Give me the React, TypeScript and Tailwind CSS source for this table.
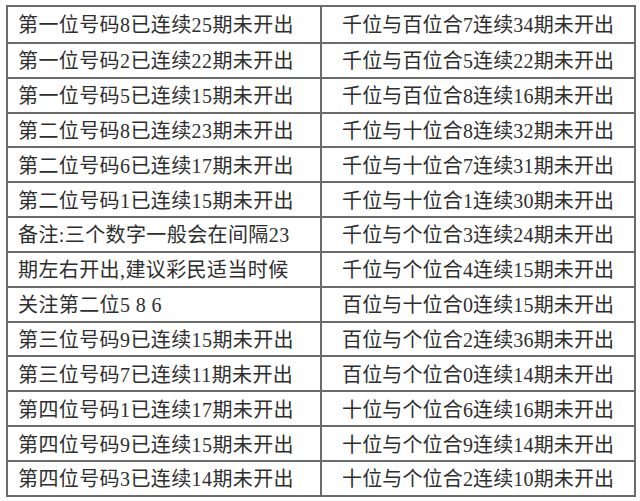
import React from "react";

const left = [
  "第一位号码8已连续25期未开出",
  "第一位号码2已连续22期未开出",
  "第一位号码5已连续15期未开出",
  "第二位号码8已连续23期未开出",
  "第二位号码6已连续17期未开出",
  "第二位号码1已连续15期未开出",
  "备注:三个数字一般会在间隔23",
  "期左右开出,建议彩民适当时候",
  "关注第二位5 8 6",
  "第三位号码9已连续15期未开出",
  "第三位号码7已连续11期未开出",
  "第四位号码1已连续17期未开出",
  "第四位号码9已连续15期未开出",
  "第四位号码3已连续14期未开出",
];

const right = [
  "千位与百位合7连续34期未开出",
  "千位与百位合5连续22期未开出",
  "千位与百位合8连续16期未开出",
  "千位与十位合8连续32期未开出",
  "千位与十位合7连续31期未开出",
  "千位与十位合1连续30期未开出",
  "千位与个位合3连续24期未开出",
  "千位与个位合4连续15期未开出",
  "百位与十位合0连续15期未开出",
  "百位与个位合2连续36期未开出",
  "百位与个位合0连续14期未开出",
  "十位与个位合6连续16期未开出",
  "十位与个位合9连续14期未开出",
  "十位与个位合2连续10期未开出",
];

export default function App() {
  return (
    <div className="w-[640px] h-[501px] bg-white pt-[5px] pl-[6px]">
      <div
        className="w-[630px] border-2 border-[#6b6b6b] text-[#2e2e2e] text-[20px] tracking-[0.4px]"
        style={{ fontFamily: '"Liberation Serif", "Noto Sans CJK SC", serif' }}
      >
        {left.map((l, i) => (
          <div
            key={i}
            className={`flex h-[34.85px] ${i > 0 ? "border-t-2 border-[#6b6b6b]" : ""}`}
          >
            <div className="w-[314px] border-r-2 border-[#6b6b6b] flex items-center pl-[10px] pt-[2px] whitespace-pre">
              {l}
            </div>
            <div className="flex-1 flex items-center pl-[20px] pt-[2px] tracking-[0.15px] whitespace-pre">
              {right[i]}
            </div>
          </div>
        ))}
      </div>
    </div>
  );
}
